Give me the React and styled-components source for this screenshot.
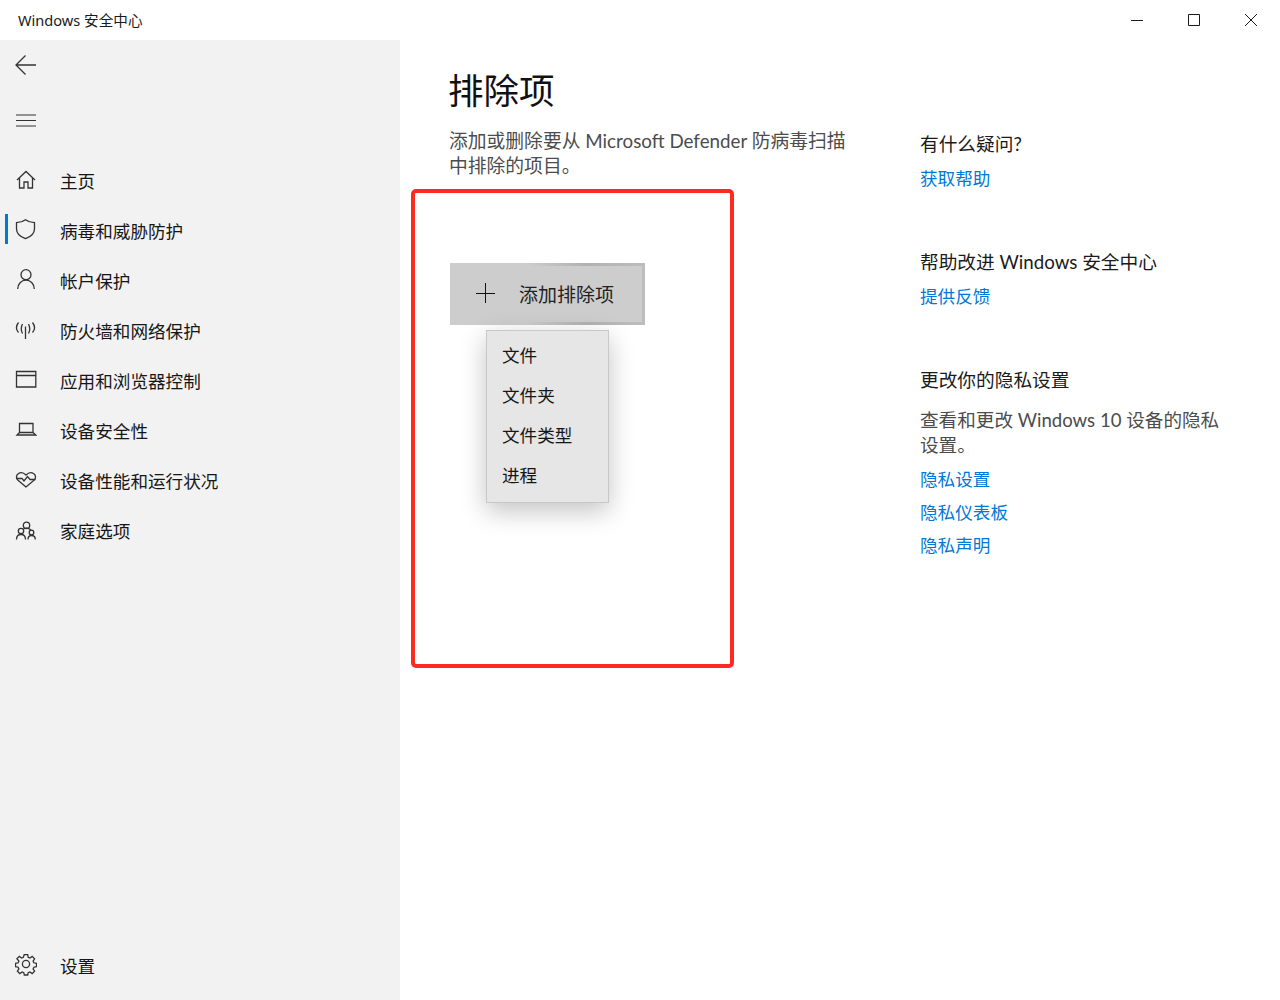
import React from 'react'
import styled, { createGlobalStyle } from 'styled-components'

const GlobalStyle = createGlobalStyle`
  html, body {
    margin: 0;
    padding: 0;
    background: #fff;
    font-family: "Noto Sans", "Noto Sans CJK SC", sans-serif;
    color: #1a1a1a;
  }
  * { box-sizing: border-box; }
`

const Window = styled.div`
  position: relative;
  width: 1280px;
  height: 1000px;
  overflow: hidden;
  display: flex;
  flex-direction: column;
`

const TitleBar = styled.header`
  height: 40px;
  flex: none;
  display: flex;
  align-items: center;
  justify-content: space-between;
  padding-left: 18px;
  font-size: 14.6px;
`

const TitleText = styled.span`
  margin-top: -2px;
`

const WindowButtons = styled.div`
  display: flex;
  padding-right: 1px;
  color: #1a1a1a;
`

const WindowButton = styled.div`
  width: 57px;
  height: 40px;
  display: flex;
  align-items: center;
  justify-content: center;
`

const Body = styled.div`
  flex: 1;
  display: flex;
  min-height: 0;
`

const Sidebar = styled.nav`
  width: 400px;
  flex: none;
  background: #f2f2f2;
  display: flex;
  flex-direction: column;
  padding-bottom: 10px;
`

const TopButton = styled.div`
  height: ${p => p.$h}px;
  padding-left: 15px;
  display: flex;
  align-items: center;
  color: #333;
`

const NavList = styled.div`
  flex: 1;
  padding-top: 5px;
`

const NavItem = styled.div`
  position: relative;
  height: 50px;
  display: flex;
  align-items: center;
  padding-left: 15px;
  font-size: 17.6px;
  color: #161616;
  ${p => p.$active && `
    &::before {
      content: "";
      position: absolute;
      left: 5px;
      top: 9px;
      width: 3px;
      height: 30px;
      background: #0078d7;
    }
  `}
`

const NavIcon = styled.span`
  width: 22px;
  height: 22px;
  margin-right: 23px;
  display: flex;
  color: #333;
`

const Content = styled.main`
  flex: 1;
  display: flex;
  min-width: 0;
`

const MainColumn = styled.section`
  width: 520px;
  flex: none;
  padding: 25px 0 0 49px;
`

const Title = styled.h1`
  margin: 0 0 0 -1px;
  font-size: 35.5px;
  line-height: 50px;
  font-weight: 400;
  color: #111;
`

const Description = styled.p`
  width: 410px;
  margin: 13px 0 0;
  font-family: "Lato", "Noto Sans CJK SC", sans-serif;
  font-size: 18.8px;
  line-height: 25px;
  color: #4c4c4c;
`

const AddWrap = styled.div`
  position: relative;
  width: 195px;
  margin: 85px 0 0 1px;
`

const AddButton = styled.div`
  height: 62px;
  display: flex;
  align-items: center;
  padding-left: 25px;
  font-size: 19px;
  color: #222;
  background: #cdcdcd;
  border-style: solid;
  border-width: 3px 3px 3px 0;
  border-image: linear-gradient(90deg, #cdcdcd 40%, #b2b2b2 70%, #bdbdbd) 3;
`

const PlusIcon = styled.span`
  width: 20px;
  height: 20px;
  margin-right: 24px;
  margin-top: -3px;
  display: flex;
  color: #111;
`

const Flyout = styled.ul`
  position: absolute;
  left: 36px;
  top: 67px;
  width: 123px;
  height: 173px;
  margin: 0;
  padding: 3px 0 0;
  list-style: none;
  background: #e6e6e6;
  border: 1px solid #c8c8c8;
  box-shadow: 0 8px 24px rgba(0, 0, 0, 0.24);
`

const FlyoutItem = styled.li`
  height: 40.2px;
  display: flex;
  align-items: center;
  padding-left: 15px;
  font-size: 17.6px;
  color: #161616;
`

const Annotation = styled.div`
  position: absolute;
  left: 411px;
  top: 189px;
  width: 323px;
  height: 479px;
  border: 4px solid #ff2a1f;
  border-radius: 5px;
  pointer-events: none;
`

const Aside = styled.aside`
  width: 310px;
  padding-top: 92px;
  display: flex;
  flex-direction: column;
`

const Block = styled.div`
  margin-bottom: 51px;
`

const BlockTitle = styled.h2`
  margin: 0 0 9px;
  font-family: "Lato", "Noto Sans CJK SC", sans-serif;
  font-size: 18.7px;
  line-height: 25px;
  font-weight: 400;
  color: #1a1a1a;
`

const BlockText = styled.p`
  width: 305px;
  margin: 15px 0 9px;
  font-family: "Lato", "Noto Sans CJK SC", sans-serif;
  font-size: 18.6px;
  line-height: 25px;
  color: #4c4c4c;
`

const HelpLink = styled.a`
  display: block;
  height: 33px;
  line-height: 25px;
  font-size: 17.6px;
  color: #0078d7;
  text-decoration: none;
`

const Svg = ({ size = 22, children }) => (
  <svg width={size} height={size} viewBox="0 0 22 22" fill="none" stroke="currentColor" strokeWidth="1.3">
    {children}
  </svg>
)

const HomeIcon = () => (
  <Svg>
    <path d="M2 11 11 2.500l9 8.500M4.500 9v10h4.500v-6h4v6h4.500V9" />
  </Svg>
)
const ShieldIcon = () => (
  <Svg>
    <path d="M10.500 .7c2.600 2 5.600 2.800 9 3v6c0 4.800-3.600 8-9 10-5.400-2-9-5.200-9-10v-6c3.400-.2 6.400-1 9-3Z" />
  </Svg>
)
const UserIcon = () => (
  <Svg>
    <circle cx="11" cy="5.700" r="5" />
    <path d="M2.700 20c0-5 3.600-8.800 8.300-8.800s8.300 3.800 8.300 8.800" />
  </Svg>
)
const SignalIcon = () => (
  <Svg>
    <path d="M10.500 7.500V20M7.500 5c-1.600 3-1.600 6.500 0 9.500M13.500 5c1.600 3 1.600 6.500 0 9.500M3.500 3.500c-2.700 3.500-2.700 7 0 10M17.500 3.500c2.700 3.500 2.700 7 0 10" />
  </Svg>
)
const BrowserIcon = () => (
  <Svg>
    <path d="M1.500 2.500h19.300v15.500H1.500ZM1.500 6.500h19.300" />
  </Svg>
)
const LaptopIcon = () => (
  <Svg>
    <path d="M4.500 4.500h13.500v9H4.500ZM4.500 13.500l-2.500 2.500h18.800l-2.800-2.500" />
  </Svg>
)
const HeartIcon = () => (
  <Svg>
    <path d="M11 18 3 11.300C.8 9.300 1 6.300 3.200 4.700 5.400 3.200 8.500 3.500 11 6c2.500-2.500 5.600-2.800 7.800-1.300 2.200 1.600 2.400 4.600.2 6.600Z" />
    <path d="M1.500 9.500H7l2 2.500 3.500-4.500 2.500 3h5.500" />
  </Svg>
)
const FamilyIcon = () => (
  <Svg>
    <circle cx="11.500" cy="6.300" r="3.200" />
    <circle cx="6" cy="12" r="2.700" />
    <circle cx="16.500" cy="13.500" r="2.300" />
    <path d="M1.500 20.500c0-3 1.800-5 4.500-5s4.500 2 4.500 5M13 20.500c0-2.500 1.300-4 3.500-4s3.800 1.500 3.800 4M8.500 10c.8-.5 1.900-.8 3-.8 2 0 3.700 1 4.500 2.500" />
  </Svg>
)
const GearIcon = () => (
  <Svg>
    <g transform="translate(0 -1)">
      <circle cx="11" cy="11" r="3.600" />
      <path d="M9.300 1.500h3.400l.5 2.800 1.700.7 2.300-1.600 2.400 2.400L18.100 8.100l.7 1.700 2.700.5v3.400l-2.700.5-.7 1.700 1.500 2.300-2.400 2.400-2.300-1.600-1.700.7-.5 2.300H9.300l-.5-2.300-1.700-.7-2.300 1.600-2.400-2.400 1.500-2.300-.7-1.700-2.700-.5v-3.400l2.700-.5.7-1.700L1.900 5.800l2.400-2.400 2.300 1.600 1.700-.7Z" />
    </g>
  </Svg>
)

const navItems = [
  { label: '主页', icon: <HomeIcon /> },
  { label: '病毒和威胁防护', icon: <ShieldIcon />, active: true },
  { label: '帐户保护', icon: <UserIcon /> },
  { label: '防火墙和网络保护', icon: <SignalIcon /> },
  { label: '应用和浏览器控制', icon: <BrowserIcon /> },
  { label: '设备安全性', icon: <LaptopIcon /> },
  { label: '设备性能和运行状况', icon: <HeartIcon /> },
  { label: '家庭选项', icon: <FamilyIcon /> },
]

const App = () => {
  return (
    <Window>
      <GlobalStyle />
      <TitleBar>
        <TitleText>Windows 安全中心</TitleText>
        <WindowButtons>
          <WindowButton>
            <svg width="12" height="12" viewBox="0 0 12 12" stroke="currentColor" strokeWidth="1" fill="none"><path d="M0 6.500h12" /></svg>
          </WindowButton>
          <WindowButton>
            <svg width="12" height="12" viewBox="0 0 12 12" stroke="currentColor" strokeWidth="1" fill="none"><path d="M.5.500h11v11H.5z" /></svg>
          </WindowButton>
          <WindowButton>
            <svg width="12" height="12" viewBox="0 0 12 12" stroke="currentColor" strokeWidth="1" fill="none"><path d="M0 0l12 12M12 0 0 12" /></svg>
          </WindowButton>
        </WindowButtons>
      </TitleBar>
      <Body>
        <Sidebar>
          <TopButton $h={50}>
            <svg width="22" height="22" viewBox="0 0 22 22" fill="none" stroke="currentColor" strokeWidth="1.300"><path d="M1 11h20M10.500 1.500 1 11l9.500 9.500" /></svg>
          </TopButton>
          <TopButton $h={60}>
            <svg width="22" height="22" viewBox="0 0 22 22" fill="none" stroke="currentColor" strokeWidth="1"><path d="M1 6h20M1 11.500h20M1 17h20" /></svg>
          </TopButton>
          <NavList>
            {navItems.map((item) => (
              <NavItem key={item.label} $active={item.active}>
                <NavIcon>{item.icon}</NavIcon>
                {item.label}
              </NavItem>
            ))}
          </NavList>
          <NavItem>
            <NavIcon><GearIcon /></NavIcon>
            设置
          </NavItem>
        </Sidebar>
        <Content>
          <MainColumn>
            <Title>排除项</Title>
            <Description>添加或删除要从 Microsoft Defender 防病毒扫描中排除的项目。</Description>
            <AddWrap>
              <AddButton>
                <PlusIcon>
                  <svg width="20" height="20" viewBox="0 0 20 20" stroke="currentColor" strokeWidth="1" fill="none"><path d="M10.500 0v20M1 10.500h19" /></svg>
                </PlusIcon>
                添加排除项
              </AddButton>
              <Flyout>
                <FlyoutItem>文件</FlyoutItem>
                <FlyoutItem>文件夹</FlyoutItem>
                <FlyoutItem>文件类型</FlyoutItem>
                <FlyoutItem>进程</FlyoutItem>
              </Flyout>
            </AddWrap>
          </MainColumn>
          <Aside>
            <Block>
              <BlockTitle>有什么疑问?</BlockTitle>
              <HelpLink href="#">获取帮助</HelpLink>
            </Block>
            <Block>
              <BlockTitle>帮助改进 Windows 安全中心</BlockTitle>
              <HelpLink href="#">提供反馈</HelpLink>
            </Block>
            <Block>
              <BlockTitle>更改你的隐私设置</BlockTitle>
              <BlockText>查看和更改 Windows 10 设备的隐私设置。</BlockText>
              <HelpLink href="#">隐私设置</HelpLink>
              <HelpLink href="#">隐私仪表板</HelpLink>
              <HelpLink href="#">隐私声明</HelpLink>
            </Block>
          </Aside>
        </Content>
      </Body>
      <Annotation />
    </Window>
  )
}

export default App
